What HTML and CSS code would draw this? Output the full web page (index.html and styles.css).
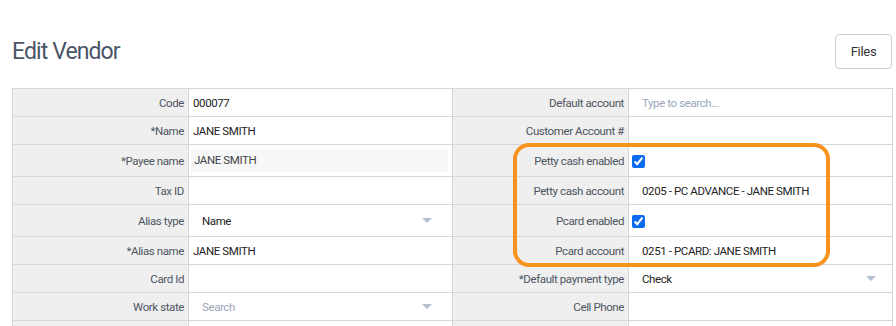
FILE: index.html
```html
<!DOCTYPE html>
<html lang="en">
<head>
  <meta charset="UTF-8">
  <title>Edit Vendor</title>
  <link rel="stylesheet" href="styles.css">
</head>
<body>
  <!-- Page header -->
  <div class="page-head">
    <h1>Edit Vendor</h1>
    <button class="btn-files">Files</button>
  </div>

  <!-- Vendor form -->
  <div class="form-wrap">
    <table class="vendor-form">
      <colgroup>
        <col class="col-label">
        <col class="col-value">
        <col class="col-label">
        <col class="col-value">
      </colgroup>
      <tr>
        <th>Code</th>
        <td>000077</td>
        <th>Default account</th>
        <td class="pad"><span class="placeholder">Type to search...</span></td>
      </tr>
      <tr>
        <th>*Name</th>
        <td>JANE SMITH</td>
        <th>Customer Account #</th>
        <td></td>
      </tr>
      <tr class="tall">
        <th>*Payee name</th>
        <td><div class="readonly">JANE SMITH</div></td>
        <th>Petty cash enabled</th>
        <td class="check"><input type="checkbox" checked></td>
      </tr>
      <tr>
        <th>Tax ID</th>
        <td></td>
        <th>Petty cash account</th>
        <td class="pad">0205 - PC ADVANCE - JANE SMITH</td>
      </tr>
      <tr class="tall">
        <th>Alias type</th>
        <td><div class="select">Name<span class="caret"></span></div></td>
        <th>Pcard enabled</th>
        <td class="check"><input type="checkbox" checked></td>
      </tr>
      <tr>
        <th>*Alias name</th>
        <td>JANE SMITH</td>
        <th>Pcard account</th>
        <td class="pad">0251 - PCARD: JANE SMITH</td>
      </tr>
      <tr>
        <th>Card Id</th>
        <td></td>
        <th>*Default payment type</th>
        <td><div class="select wide">Check<span class="caret"></span></div></td>
      </tr>
      <tr>
        <th>Work state</th>
        <td><div class="select"><span class="placeholder">Search</span><span class="caret"></span></div></td>
        <th>Cell Phone</th>
        <td></td>
      </tr>
      <tr>
        <th></th>
        <td></td>
        <th></th>
        <td></td>
      </tr>
    </table>
    <!-- highlight round the petty cash / pcard fields -->
    <div class="highlight"></div>
  </div>
</body>
</html>
```

FILE: styles.css
```css
* {
  box-sizing: border-box;
}
body {
  margin: 0;
  padding: 0 3px 0 12px;
  font-family: Roboto, "Liberation Sans", sans-serif;
  font-size: 11.5px;
  letter-spacing: -0.4px;
  color: #222;
  background: #fff;
}
/* Header */
.page-head {
  display: flex;
  justify-content: space-between;
  align-items: center;
  padding-top: 34px;
  height: 69px;
  margin-bottom: 19px;
}
.page-head h1 {
  margin: 0;
  font-size: 23px;
  font-weight: 400;
  letter-spacing: -0.9px;
  color: #4a5566;
}
.btn-files {
  width: 57px;
  height: 35px;
  margin-right: 1px;
  font-family: inherit;
  font-size: 13px;
  letter-spacing: -0.3px;
  color: #333;
  background: #fff;
  border: 1px solid #ccc;
  border-radius: 4px;
}
/* Form table */
.form-wrap {
  position: relative;
}
.vendor-form {
  width: 881px;
  border-collapse: collapse;
  table-layout: fixed;
}
.col-label {
  width: 176px;
}
.col-value {
  width: 264px;
}
.vendor-form th,
.vendor-form td {
  height: 28px;
  padding: 0 4px;
  border: 1px solid #d6d6d6;
  vertical-align: middle;
  white-space: nowrap;
}
.vendor-form th {
  background: #efefef;
  font-weight: 400;
  text-align: right;
  color: #4d5561;
}
.vendor-form tr.tall th,
.vendor-form tr.tall td {
  height: 32px;
}
.vendor-form td.pad {
  padding-left: 13px;
}
.vendor-form td.check {
  padding-left: 3px;
}
.check input {
  width: 13px;
  height: 13px;
  margin: 0;
  accent-color: #0b6cf0;
  vertical-align: middle;
}
.placeholder {
  color: #9aa8b8;
}
.readonly {
  height: 23px;
  line-height: 23px;
  padding-left: 3px;
  margin-left: -2px;
  background: #f7f7f7;
  color: #444;
}
.select {
  display: flex;
  justify-content: space-between;
  align-items: center;
  padding: 0 16px 0 9px;
}
.select.wide {
  padding-left: 9px;
  padding-right: 12px;
}
.caret {
  width: 0;
  height: 0;
  border-left: 5px solid transparent;
  border-right: 5px solid transparent;
  border-top: 5px solid #b3c1d1;
}
/* Highlight box */
.highlight {
  position: absolute;
  left: 501px;
  top: 55px;
  width: 317px;
  height: 124px;
  border: 4px solid #f7931e;
  border-radius: 16px;
}
```
